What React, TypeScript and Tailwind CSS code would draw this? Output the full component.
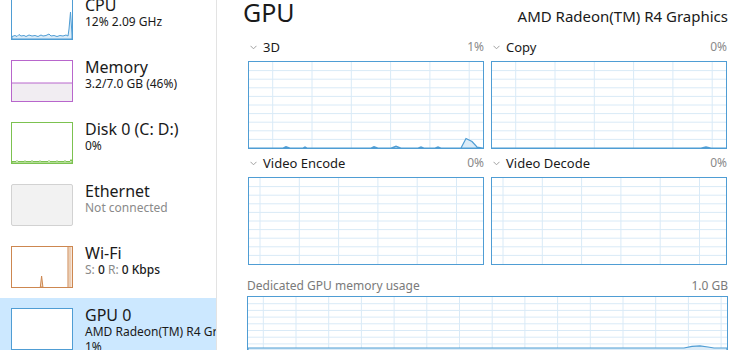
import React from "react";

// ─── Chart (task manager style grid + data) ──────────────────

type ChartProps = {
  w: number;
  h: number;
  cols: number[];
  rows: number[];
  data?: string;
  className?: string;
};

function Chart({ w, h, cols, rows, data, className = "" }: ChartProps) {
  return (
    <div className={`overflow-hidden border border-[#4f9dd4] bg-white ${className}`}>
      <svg
        viewBox={`0 0 ${w} ${h}`}
        preserveAspectRatio="none"
        className="block h-full w-full"
      >
        {rows.map((y) => (
          <line
            key={`r${y}`}
            x1={0}
            x2={w}
            y1={y}
            y2={y}
            stroke="#d9eaf7"
            strokeWidth={1}
            vectorEffect="non-scaling-stroke"
          />
        ))}
        {cols.map((x) => (
          <line
            key={`c${x}`}
            x1={x}
            x2={x}
            y1={0}
            y2={h}
            stroke="#d9eaf7"
            strokeWidth={1}
            vectorEffect="non-scaling-stroke"
          />
        ))}
        {data && (
          <path
            d={data}
            fill="#dcecf8"
            stroke="#4f9dd4"
            strokeWidth={1.2}
            vectorEffect="non-scaling-stroke"
          />
        )}
      </svg>
    </div>
  );
}

const range = (start: number, step: number, n: number) =>
  Array.from({ length: n }, (_, i) => +(start + step * i).toFixed(1));

const SMALL_ROWS = range(8.6, 8.6, 9);
const COLS_A = range(23.7, 39.3, 6);
const COLS_B = range(11, 39.3, 6);

const DATA_3D =
  "M0,86 L34,86 L37,84.6 L41,86 L54,86 L56,85 L58,86 L122,86 L125,84.6 L129,86 L142,86 L147,84.2 L152,86 L169,86 L172,85 L175,86 L186,86 L189,85 L192,86 L212,86 L217,76.5 L223,79.5 L228,85 L234,86 Z";
const DATA_COPY = "M0,86 L209,86 L214,84.8 L219,86 L234,86 Z";
const DATA_MEM =
  "M0,68 L0,51 L436,51 L444,49.3 L452,48.8 L460,50 L466,51 L479,51 L479,68 Z";

// ─── Section header ──────────────────────────────────────────

function Chevron() {
  return (
    <svg width="7" height="5" viewBox="0 0 7 5" className="mr-[6px] mt-[1px]">
      <polyline points="0.5,0.8 3.5,3.8 6.5,0.8" fill="none" stroke="#a0a0a0" strokeWidth="1" />
    </svg>
  );
}

function Section({
  label,
  value,
  cols,
  data,
}: {
  label: string;
  value: string;
  cols: number[];
  data?: string;
}) {
  return (
    <div>
      <div className="flex h-[16px] items-center justify-between pl-[2px]">
        <div className="flex items-center text-[13px] leading-[16px] text-[#1a1a1a]">
          <Chevron />
          {label}
        </div>
        <span className="text-[12px] leading-[16px] text-[#8a8a8a]">{value}</span>
      </div>
      <Chart
        w={234}
        h={86}
        cols={cols}
        rows={SMALL_ROWS}
        data={data}
        className="mt-[6px] h-[88px]"
      />
    </div>
  );
}

// ─── Sidebar thumbnails ──────────────────────────────────────

function Thumb({
  border,
  bg = "bg-white",
  children,
}: {
  border: string;
  bg?: string;
  children?: React.ReactNode;
}) {
  return (
    <div className={`h-[42px] w-[62px] shrink-0 overflow-hidden border ${border} ${bg}`}>
      <svg viewBox="0 0 60 40" preserveAspectRatio="none" className="block h-full w-full">
        {children}
      </svg>
    </div>
  );
}

function SideRow({
  thumb,
  title,
  children,
  selected = false,
}: {
  thumb: React.ReactNode;
  title: string;
  children?: React.ReactNode;
  selected?: boolean;
}) {
  return (
    <div
      className={`flex h-[62px] items-start gap-3 py-[10px] pl-[11px] ${
        selected ? "bg-[#cce8ff]" : ""
      }`}
    >
      {thumb}
      <div className="-mt-[2px] min-w-0 whitespace-nowrap">
        <div className="text-[16px] leading-[18px] text-[#1a1a1a]">{title}</div>
        <div className="text-[12px] leading-[15px] text-[#1a1a1a]">{children}</div>
      </div>
    </div>
  );
}

function Sidebar() {
  return (
    <div className="h-full w-[217px] shrink-0 overflow-hidden border-r border-[#e3e3e3]">
      <div className="-mt-[12px]">
        <SideRow
          title="CPU"
          thumb={
            <Thumb border="border-[#4f9dd4]">
              <path
                d="M0,40 L0,37.5 L3,36.5 L5,37.5 L7,35.5 L9,37 L12,36.5 L14,37.5 L17,36 L20,37 L23,36.5 L26,37.5 L29,36 L31,37 L34,36.5 L37,35 L39,37 L42,36.5 L45,37.5 L48,36.5 L51,37 L54,36 L56,37 L57,30 L58.5,13 L59.5,28 L60,36 L60,40 Z"
                fill="#dcecf8"
                stroke="#4f9dd4"
                strokeWidth="1"
                vectorEffect="non-scaling-stroke"
              />
            </Thumb>
          }
        >
          12% 2.09 GHz
        </SideRow>
        <SideRow
          title="Memory"
          thumb={
            <Thumb border="border-[#b866cc]">
              <rect x="0" y="22" width="60" height="18" fill="#f1edf2" />
              <line x1="0" x2="60" y1="22" y2="22" stroke="#b866cc" strokeWidth="1" vectorEffect="non-scaling-stroke" />
            </Thumb>
          }
        >
          3.2/7.0 GB (46%)
        </SideRow>
        <SideRow
          title="Disk 0 (C: D:)"
          thumb={
            <Thumb border="border-[#7cc250]">
              <path
                d="M0,40 L0,38.5 L4,38.5 L5,37.5 L6,38.5 L12,38.5 L13,37.8 L14,38.5 L19,38.5 L20,37.6 L21,38.5 L27,38.5 L28,37.8 L29,38.5 L36,38.5 L37,37.5 L38,38.5 L44,38.5 L45,37.8 L46,38.5 L52,38.5 L53,37.6 L54,38.5 L58,38.5 L59,36.5 L60,38.5 L60,40 Z"
                fill="#e6f3dc"
                stroke="#7cc250"
                strokeWidth="1"
                vectorEffect="non-scaling-stroke"
              />
            </Thumb>
          }
        >
          0%
        </SideRow>
        <SideRow
          title="Ethernet"
          thumb={<Thumb border="rounded-[2px] border-[#d2d2d2]" bg="bg-[#f2f2f2]" />}
        >
          <span className="text-[#8a8a8a]">Not connected</span>
        </SideRow>
        <SideRow
          title="Wi-Fi"
          thumb={
            <Thumb border="border-[#cd8750]">
              <path
                d="M28.3,40 L29.6,29 L30.9,40 Z"
                fill="#f3ddc9"
                stroke="#cd8750"
                strokeWidth="1"
                vectorEffect="non-scaling-stroke"
              />
              <rect x="56" y="0" width="4" height="40" fill="#f6e7da" />
              <line x1="56" x2="56" y1="0" y2="40" stroke="#cd8750" strokeWidth="1" vectorEffect="non-scaling-stroke" />
              <line x1="58" x2="58" y1="0" y2="40" stroke="#e1b48f" strokeWidth="1" vectorEffect="non-scaling-stroke" />
            </Thumb>
          }
        >
          <span className="text-[#8a8a8a]">S: </span>
          <span className="font-medium">0</span>
          <span className="text-[#8a8a8a]"> R: </span>
          <span className="font-medium">0 Kbps</span>
        </SideRow>
        <SideRow title="GPU 0" selected thumb={<Thumb border="border-[#4f9dd4]" />}>
          AMD Radeon(TM) R4 Graphics
          <div>1%</div>
        </SideRow>
      </div>
    </div>
  );
}

// ─── Main panel ──────────────────────────────────────────────

function GpuPanel() {
  return (
    <div className="h-full min-w-0 flex-1 overflow-hidden pl-[30px] pr-[22px]">
      <div className="flex h-[24px] w-[481px] items-baseline justify-between">
        <h1 className="-ml-[4px] text-[25px] leading-[24px] text-[#1a1a1a]">GPU</h1>
        <span className="text-[15px] leading-[20px] text-[#1a1a1a]">AMD Radeon(TM) R4 Graphics</span>
      </div>

      <div className="mt-[15px] grid w-[480px] grid-cols-2 gap-x-[7px] gap-y-[6px] pl-[1px]">
        <Section label="3D" value="1%" cols={COLS_A} data={DATA_3D} />
        <Section label="Copy" value="0%" cols={COLS_A} data={DATA_COPY} />
        <Section label="Video Encode" value="0%" cols={COLS_B} />
        <Section label="Video Decode" value="0%" cols={COLS_B} />
      </div>

      <div className="mt-[13px] flex h-[16px] w-[481px] items-center justify-between text-[12px] leading-[16px] text-[#7a7a7a]">
        <span>Dedicated GPU memory usage</span>
        <span>1.0 GB</span>
      </div>
      <Chart
        w={479}
        h={68}
        cols={range(15.3, 32.7, 15)}
        rows={range(6.7, 6.7, 9)}
        data={DATA_MEM}
        className="mt-[2px] h-[70px] w-[481px]"
      />
    </div>
  );
}

export default function App() {
  return (
    <div className="flex h-[350px] w-[750px] overflow-hidden bg-white font-['Segoe_UI','Noto_Sans',sans-serif]">
      <Sidebar />
      <GpuPanel />
    </div>
  );
}
